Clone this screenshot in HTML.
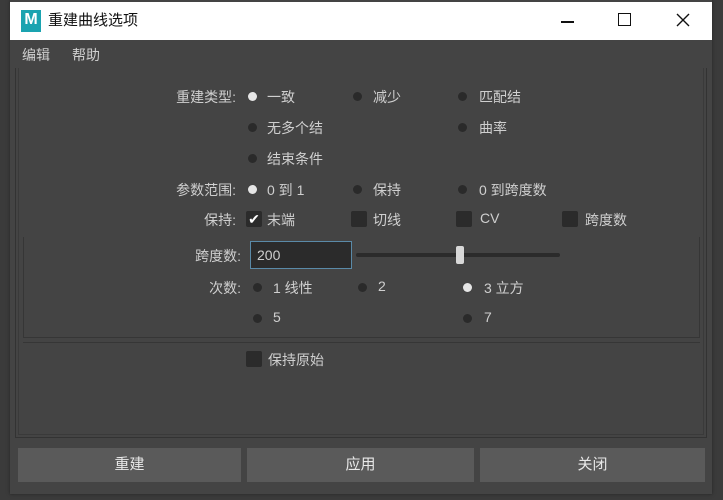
<!DOCTYPE html>
<html><head><meta charset="utf-8"><style>
*{margin:0;padding:0;box-sizing:border-box}
body{width:723px;height:500px;background:#3b3b3b;position:relative;overflow:hidden;font-family:"Liberation Sans","Noto Sans CJK SC",sans-serif;font-size:14px;color:#cfcfcf}
.win{position:absolute;left:10px;top:0;width:702px;height:494px;background:#444;box-shadow:0 0 3px #222}
.title{position:absolute;left:0;top:2px;width:702px;height:38px;background:#fff;color:#111;font-size:15px}
.t{position:absolute;white-space:nowrap}
.dot{position:absolute;width:9px;height:9px;border-radius:50%;background:#2a2a2a}
.dot.on{background:#e6e6e6}
.cb{position:absolute;width:16px;height:16px;background:#2b2b2b;border-radius:2px}
.btn{position:absolute;top:448px;height:34px;background:#5a5a5a;text-align:center;line-height:34px;color:#e8e8e8;font-size:15px}
.lbl{position:absolute;text-align:right;width:120px;white-space:nowrap}
</style></head><body>
<div class="win">
 <div class="title">
  <div style="position:absolute;left:11px;top:8px;width:20px;height:22px;background:#1aa3b0;color:#fff;font-weight:bold;font-size:16px;text-align:center;line-height:20px">M</div>
  <div class="t" style="left:38px;top:7px">重建曲线选项</div>
  <div style="position:absolute;left:551px;top:19px;width:13px;height:1.5px;background:#111"></div>
  <div style="position:absolute;left:608px;top:11px;width:13px;height:13px;border:1.5px solid #111"></div>
  <svg style="position:absolute;left:666px;top:11px" width="14" height="14"><path d="M1 1L13 13M13 1L1 13" stroke="#111" stroke-width="1.4"/></svg>
 </div>
 <div class="t" style="left:12px;top:45px">编辑</div>
 <div class="t" style="left:62px;top:45px">帮助</div>
 <div style="position:absolute;left:5px;top:68px;width:692px;height:370px;border:1px solid #333;border-top:none"></div>
 <div style="position:absolute;left:8px;top:68px;width:686px;height:367px;border:1px solid #3a3a3a;border-top:none"></div>
 <div style="position:absolute;left:13px;top:237px;width:677px;height:101px;border:1px solid #363636;border-top:none"></div>
 <div style="position:absolute;left:13px;top:342px;width:677px;height:1px;background:#363636"></div>

 <div class="lbl" style="left:106px;top:87px">重建类型:</div>
 <div class="dot on" style="left:238px;top:92px"></div><div class="t" style="left:257px;top:87px">一致</div>
 <div class="dot" style="left:343px;top:92px"></div><div class="t" style="left:363px;top:87px">减少</div>
 <div class="dot" style="left:448px;top:92px"></div><div class="t" style="left:469px;top:87px">匹配结</div>
 <div class="dot" style="left:238px;top:123px"></div><div class="t" style="left:257px;top:118px">无多个结</div>
 <div class="dot" style="left:448px;top:123px"></div><div class="t" style="left:469px;top:118px">曲率</div>
 <div class="dot" style="left:238px;top:154px"></div><div class="t" style="left:257px;top:149px">结束条件</div>

 <div class="lbl" style="left:106px;top:180px">参数范围:</div>
 <div class="dot on" style="left:238px;top:185px"></div><div class="t" style="left:257px;top:180px">0 到 1</div>
 <div class="dot" style="left:343px;top:185px"></div><div class="t" style="left:363px;top:180px">保持</div>
 <div class="dot" style="left:448px;top:185px"></div><div class="t" style="left:469px;top:180px">0 到跨度数</div>

 <div class="lbl" style="left:106px;top:210px">保持:</div>
 <div class="cb" style="left:236px;top:211px;color:#fff;font-size:14px;line-height:16px;text-align:center">✔</div><div class="t" style="left:257px;top:210px">末端</div>
 <div class="cb" style="left:341px;top:211px"></div><div class="t" style="left:363px;top:210px">切线</div>
 <div class="cb" style="left:446px;top:211px"></div><div class="t" style="left:470px;top:210px">CV</div>
 <div class="cb" style="left:552px;top:211px"></div><div class="t" style="left:575px;top:210px">跨度数</div>

 <div class="lbl" style="left:111px;top:246px">跨度数:</div>
 <div style="position:absolute;left:240px;top:241px;width:102px;height:28px;background:#2b2b2b;border:1px solid #5a8aa8;padding-left:6px;line-height:26px">200</div>
 <div style="position:absolute;left:346px;top:253px;width:204px;height:4px;background:#2b2b2b;border-radius:2px"></div>
 <div style="position:absolute;left:446px;top:246px;width:8px;height:18px;background:#d8d8d8;border-radius:2px"></div>

 <div class="lbl" style="left:111px;top:278px">次数:</div>
 <div class="dot" style="left:243px;top:283px"></div><div class="t" style="left:263px;top:278px">1 线性</div>
 <div class="dot" style="left:348px;top:283px"></div><div class="t" style="left:368px;top:278px">2</div>
 <div class="dot on" style="left:453px;top:283px"></div><div class="t" style="left:474px;top:278px">3 立方</div>
 <div class="dot" style="left:243px;top:314px"></div><div class="t" style="left:263px;top:309px">5</div>
 <div class="dot" style="left:453px;top:314px"></div><div class="t" style="left:474px;top:309px">7</div>

 <div class="cb" style="left:236px;top:351px"></div><div class="t" style="left:258px;top:350px">保持原始</div>

 <div class="btn" style="left:8px;width:223px">重建</div>
 <div class="btn" style="left:237px;width:227px">应用</div>
 <div class="btn" style="left:470px;width:225px">关闭</div>
</div>
</body></html>
